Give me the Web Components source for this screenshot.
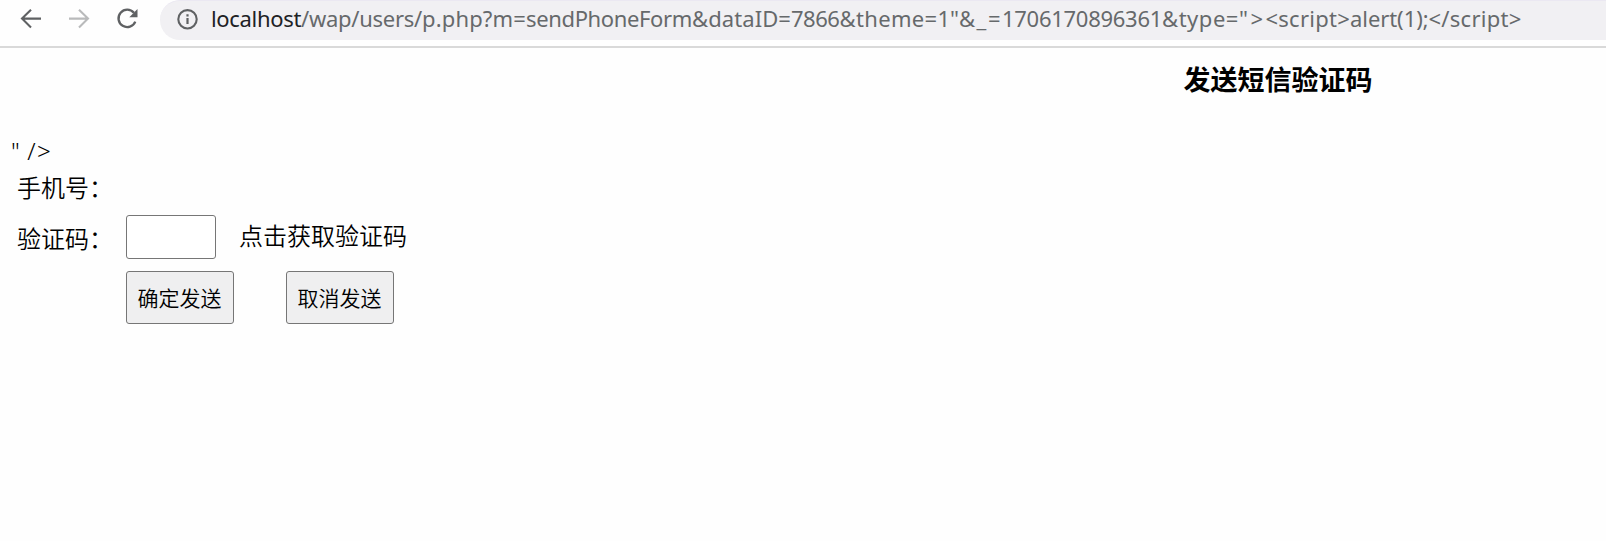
<!DOCTYPE html>
<html lang="zh-CN">
<head>
<meta charset="utf-8">
<title>发送短信验证码</title>
<style>
html,body{margin:0;padding:0;background:#fefefe;overflow:hidden}
body{font-family:"Noto Sans","Noto Sans CJK SC",sans-serif;color:#000}
</style>
</head>
<body>
<browser-bar></browser-bar>
<sms-form></sms-form>
<script>
class UrlPart extends HTMLElement{
  connectedCallback(){
    const root=this.attachShadow({mode:'open'});
    root.innerHTML='<style>:host{display:block;flex:none;white-space:pre}span{display:inline-block}</style><span><slot></slot></span>';
    const span=root.querySelector('span');
    const width=+this.getAttribute('width');
    this.style.width=width+'px';
    const gap=(width-span.getBoundingClientRect().width)/this.textContent.length;
    span.style.letterSpacing=gap+'px';
  }
}
class BrowserBar extends HTMLElement{
  connectedCallback(){
    this.attachShadow({mode:'open'}).innerHTML=`
<style>
:host{display:flex;height:46px;border-bottom:2px solid #d9d9d9;background:#fefefe;overflow:hidden}
nav{display:flex;flex:none;width:160px;height:40px;box-sizing:border-box;padding:7px 0 0 19px;gap:24px}
svg{display:block;flex:none;fill:none;stroke:#5f6163;stroke-width:2.1}
.off{stroke:#b9babb}
.pill{display:flex;flex:1;height:40px;box-sizing:border-box;background:#f1f0f3;border-top:1px solid #ebe8f2;border-radius:20px 0 0 20px;padding:0 0 0 15px}
.info{margin:6px 12px 0 0}
.url{display:flex;font-size:22px;line-height:30px;margin-top:2px;color:#66696b}
.host{color:#202124}
</style>
<nav>
<svg width="24" height="24" viewBox="0 0 24 24"><path d="M22 11.6H3.5M12 2.7L3 11.6L12 20.5"/></svg>
<svg class="off" width="24" height="24" viewBox="0 0 24 24"><path d="M2 11.6H20.5M12 2.7L21 11.6L12 20.5"/></svg>
<svg width="24" height="24" viewBox="0 0 24 24"><path d="M18.9 5.8A8.7 8.7 0 1 0 20.3 14.6" stroke-width="2.3"/><path d="M22.5 2V10.3H14.3Z" fill="#5f6163" stroke="none"/></svg>
</nav>
<div class="pill">
<svg class="info" width="24" height="24" viewBox="0 0 24 24"><circle cx="12.5" cy="12.3" r="9.2"/><path d="M12.5 11V17M12.5 7.2V9.4" stroke-width="2.2"/></svg>
<div class="url"><url-part class="host" width="90">localhost</url-part><url-part width="121">/wap/users/</url-part><url-part width="104">p.php?m=</url-part><url-part width="166">sendPhoneForm</url-part><url-part width="99">&amp;dataID=</url-part><url-part width="48.5">7866</url-part><url-part width="98">&amp;theme=</url-part><url-part width="21.5">1"</url-part><url-part width="43">&amp;_=</url-part><url-part width="160">1706170896361</url-part><url-part width="77">&amp;type=</url-part><url-part width="26.5">"&gt;</url-part><url-part width="84.5">&lt;script&gt;</url-part><url-part width="78.5">alert(1);</url-part><url-part width="93">&lt;/script&gt;</url-part></div>
</div>`;
  }
}
class FormButton extends HTMLElement{
  connectedCallback(){
    this.attachShadow({mode:'open'}).innerHTML=`
<style>
:host{display:block}
button{display:block;width:108px;height:53px;box-sizing:border-box;margin:0;padding:0 1px 1px 0;border:1px solid #767676;border-radius:3px;background:#efeff0;color:#000;font:350 21px "Noto Sans CJK SC",sans-serif}
</style><button type="button"><slot></slot></button>`;
  }
}
class SmsForm extends HTMLElement{
  connectedCallback(){
    this.attachShadow({mode:'open'}).innerHTML=`
<style>
:host{display:block;overflow:hidden;height:493px;font:350 24px "Noto Sans CJK SC",sans-serif}
h1{width:2556px;margin:0;padding-top:11px;text-align:center;font-size:27px;line-height:40px;font-weight:700}
.stray{font-family:"Noto Sans",sans-serif;font-weight:300;line-height:34px;margin:35px 0 0 11px;letter-spacing:1.6px;word-spacing:-2px}
form{display:grid;grid-template-columns:109px 1fr;grid-template-rows:46px 49px 60px;padding:0 0 0 17px;align-items:start}
label{line-height:38px}
.code{padding-top:5px}
.row{display:flex}
input{display:block;width:90px;height:44px;box-sizing:border-box;margin:1px 23px 0 0;border:1px solid #767676;border-radius:3px;background:#fff}
.get{line-height:38px;padding-top:2px}
.actions{grid-column:2;display:flex;gap:52px;padding-top:8px}
</style>
<h1>发送短信验证码</h1>
<div class="stray">" /&gt;</div>
<form><label>手机号：</label><span></span>
<label class="code">验证码：</label><div class="row"><input aria-label="验证码"><span class="get">点击获取验证码</span></div>
<div class="actions"><form-button>确定发送</form-button><form-button>取消发送</form-button></div></form>`;
  }
}
customElements.define('url-part',UrlPart);
customElements.define('form-button',FormButton);
customElements.define('sms-form',SmsForm);
customElements.define('browser-bar',BrowserBar);
</script>
</body>
</html>
